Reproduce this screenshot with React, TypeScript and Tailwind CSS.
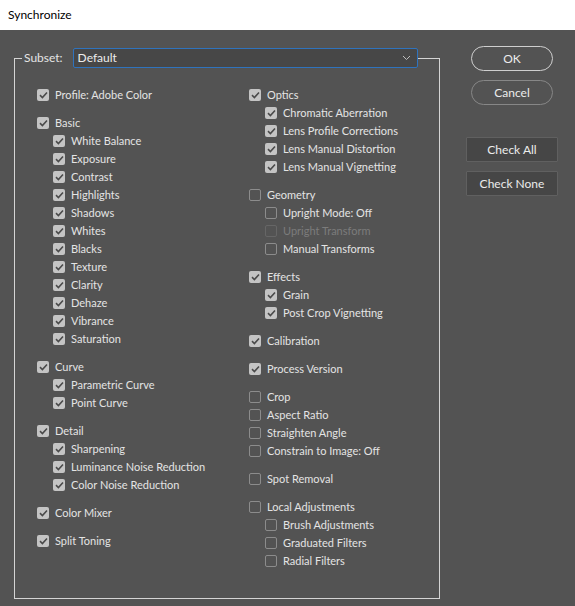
import type { ReactNode } from "react";

type Item = { label: string; checked: boolean; disabled?: boolean };
type Group = { head: Item; subs?: Item[] };

const c = (label: string, checked = true, disabled = false): Item => ({ label, checked, disabled });

const left: Group[] = [
  { head: c("Profile: Adobe Color") },
  {
    head: c("Basic"),
    subs: [
      c("White Balance"),
      c("Exposure"),
      c("Contrast"),
      c("Highlights"),
      c("Shadows"),
      c("Whites"),
      c("Blacks"),
      c("Texture"),
      c("Clarity"),
      c("Dehaze"),
      c("Vibrance"),
      c("Saturation"),
    ],
  },
  { head: c("Curve"), subs: [c("Parametric Curve"), c("Point Curve")] },
  {
    head: c("Detail"),
    subs: [c("Sharpening"), c("Luminance Noise Reduction"), c("Color Noise Reduction")],
  },
  { head: c("Color Mixer") },
  { head: c("Split Toning") },
];

// groups without a gap between them are nested arrays
const right: Group[][] = [
  [
    {
      head: c("Optics"),
      subs: [
        c("Chromatic Aberration"),
        c("Lens Profile Corrections"),
        c("Lens Manual Distortion"),
        c("Lens Manual Vignetting"),
      ],
    },
  ],
  [
    {
      head: c("Geometry", false),
      subs: [c("Upright Mode: Off", false), c("Upright Transform", false, true), c("Manual Transforms", false)],
    },
  ],
  [{ head: c("Effects"), subs: [c("Grain"), c("Post Crop Vignetting")] }],
  [{ head: c("Calibration") }],
  [{ head: c("Process Version") }],
  [
    { head: c("Crop", false) },
    { head: c("Aspect Ratio", false) },
    { head: c("Straighten Angle", false) },
    { head: c("Constrain to Image: Off", false) },
  ],
  [{ head: c("Spot Removal", false) }],
  [
    {
      head: c("Local Adjustments", false),
      subs: [c("Brush Adjustments", false), c("Graduated Filters", false), c("Radial Filters", false)],
    },
  ],
];

function Box({ checked, disabled }: { checked: boolean; disabled?: boolean }) {
  if (checked) {
    return (
      <span className="flex h-[12px] w-[12px] shrink-0 items-center justify-center rounded-[2px] bg-[#c4c4c4]">
        <svg width="9" height="8" viewBox="0 0 9 8" fill="none">
          <path d="M1 4.2 3.4 6.5 8 1.5" stroke="#4a4a4a" strokeWidth="1.6" />
        </svg>
      </span>
    );
  }
  return (
    <span
      className={
        "h-[12px] w-[12px] shrink-0 rounded-[2px] border " +
        (disabled ? "border-[#666666]" : "border-[#8c8c8c]")
      }
    />
  );
}

function Row({ item, sub }: { item: Item; sub?: boolean }) {
  return (
    <div className={"flex h-[18px] items-center gap-[6px] " + (sub ? "pl-[16px]" : "")}>
      <Box checked={item.checked} disabled={item.disabled} />
      <span className={"whitespace-nowrap " + (item.disabled ? "text-[#7c7c7c]" : "text-[#e4e4e4]")}>
        {item.label}
      </span>
    </div>
  );
}

function GroupRows({ g }: { g: Group }) {
  return (
    <>
      <Row item={g.head} />
      {g.subs?.map((s) => <Row key={s.label} item={s} sub />)}
    </>
  );
}

function Pill({ children, strong }: { children: ReactNode; strong?: boolean }) {
  return (
    <button
      className={
        "flex h-[25px] w-[82px] items-center justify-center rounded-full border text-[#ececec] " +
        (strong ? "border-[#cfcfcf]" : "border-[#878787]")
      }
    >
      {children}
    </button>
  );
}

function Flat({ children }: { children: ReactNode }) {
  return (
    <button className="flex h-[25px] w-[92px] items-center justify-center rounded-[1px] border border-[#606060] bg-[#464646] text-[#ececec]">
      {children}
    </button>
  );
}

export default function App() {
  return (
    <div
      className="flex h-[606px] w-[575px] flex-col bg-[#535353] text-[12px]"
      style={{ fontFamily: 'Lato, "Noto Sans", sans-serif' }}
    >
      <div className="flex h-[30px] items-center bg-white pl-[8px] text-[12px] text-black">Synchronize</div>

      <div className="flex items-start pl-[14px]">
        <fieldset className="mt-[18px] h-[551px] w-[426px] border border-[#d4d4d4]">
          <legend className="ml-[7px] flex h-[20px] items-center pl-[2px]">
            <span className="pr-[10px] text-[#e4e4e4]">Subset:</span>
            <div className="flex h-[20px] w-[345px] items-center justify-between rounded-[2px] border border-[#2f73bd] bg-[#474747] pl-[4px] pr-[6px] text-[#ececec]">
              <span>Default</span>
              <svg width="9" height="6" viewBox="0 0 9 6" fill="none">
                <path d="M1 1 4.5 4.5 8 1" stroke="#bdbdbd" strokeWidth="1" />
              </svg>
            </div>
          </legend>

          <div className="flex pt-[18px] text-[11px]">
            <div className="flex w-[234px] flex-col gap-[10px] pl-[22px]">
              {left.map((g) => (
                <div key={g.head.label} className="flex flex-col">
                  <GroupRows g={g} />
                </div>
              ))}
            </div>
            <div className="flex flex-col gap-[10px]">
              {right.map((block, i) => (
                <div key={i} className="flex flex-col">
                  {block.map((g) => (
                    <GroupRows key={g.head.label} g={g} />
                  ))}
                </div>
              ))}
            </div>
          </div>
        </fieldset>

        <div className="ml-[26px] mt-[16px] flex w-[92px] flex-col items-center">
          <Pill strong>OK</Pill>
          <div className="mt-[9px]">
            <Pill>Cancel</Pill>
          </div>
          <div className="mt-[32px] flex flex-col gap-[9px]">
            <Flat>Check All</Flat>
            <Flat>Check None</Flat>
          </div>
        </div>
      </div>
    </div>
  );
}
